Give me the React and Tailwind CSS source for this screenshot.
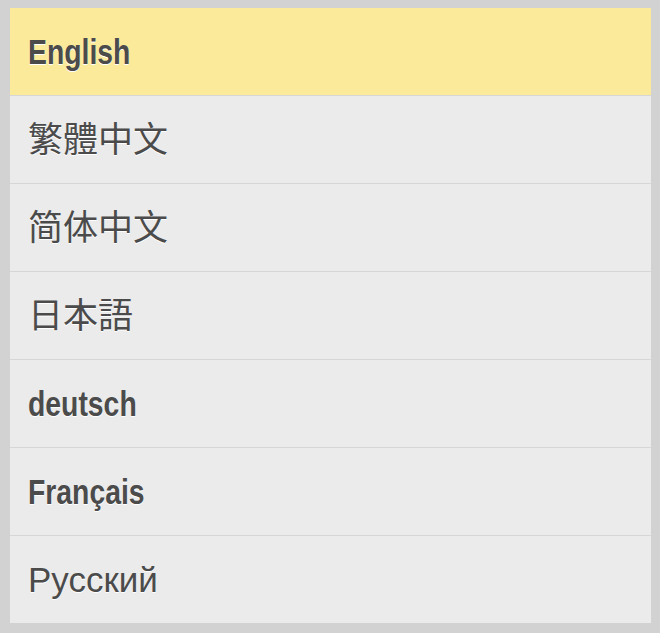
const LANGUAGES = [
  { id: 'en', label: 'English', bold: true, active: true },
  { id: 'zh-tw', label: '繁體中文', cjk: 'tc' },
  { id: 'zh-cn', label: '简体中文', cjk: 'sc' },
  { id: 'ja', label: '日本語', cjk: 'jp' },
  { id: 'de', label: 'deutsch', bold: true },
  { id: 'fr', label: 'Français', bold: true },
  { id: 'ru', label: 'Русский' },
];

const CJK_FONTS = {
  tc: "font-['Liberation_Sans','Noto_Sans_CJK_TC',sans-serif]",
  sc: "font-['Liberation_Sans','Noto_Sans_CJK_SC',sans-serif]",
  jp: "font-['Liberation_Sans','Noto_Sans_CJK_JP',sans-serif]",
};

function LanguageRow({ language }) {
  // condensed bold face isn't installed, so squeeze the regular one
  let fontClass = "font-['Liberation_Sans',Arial,sans-serif] text-[35px]";
  if (language.bold) {
    fontClass =
      "inline-block origin-left scale-x-[0.81] font-['Liberation_Sans',Arial,sans-serif] font-bold text-[35px]";
  } else if (language.cjk) {
    fontClass = `${CJK_FONTS[language.cjk]} text-[35px]`;
  }

  return (
    <button
      type="button"
      className={`flex h-[88px] w-full items-center border-b border-[#d6d6d6] pl-[18px] text-left last:h-[87px] last:border-b-0 ${
        language.active ? 'bg-[#fcea9b]' : 'bg-[#ebebeb]'
      }`}
    >
      <span className={`${fontClass} leading-none text-[#4b4b4b] [text-shadow:0_1px_0_#ffffff]`}>
        {language.label}
      </span>
    </button>
  );
}

export default function App() {
  return (
    <div className="h-[633px] w-[660px] bg-[#d2d2d2] pb-[10px] pl-[10px] pr-[9px] pt-[8px]">
      <div className="flex flex-col">
        {LANGUAGES.map((language) => (
          <LanguageRow key={language.id} language={language} />
        ))}
      </div>
    </div>
  );
}
